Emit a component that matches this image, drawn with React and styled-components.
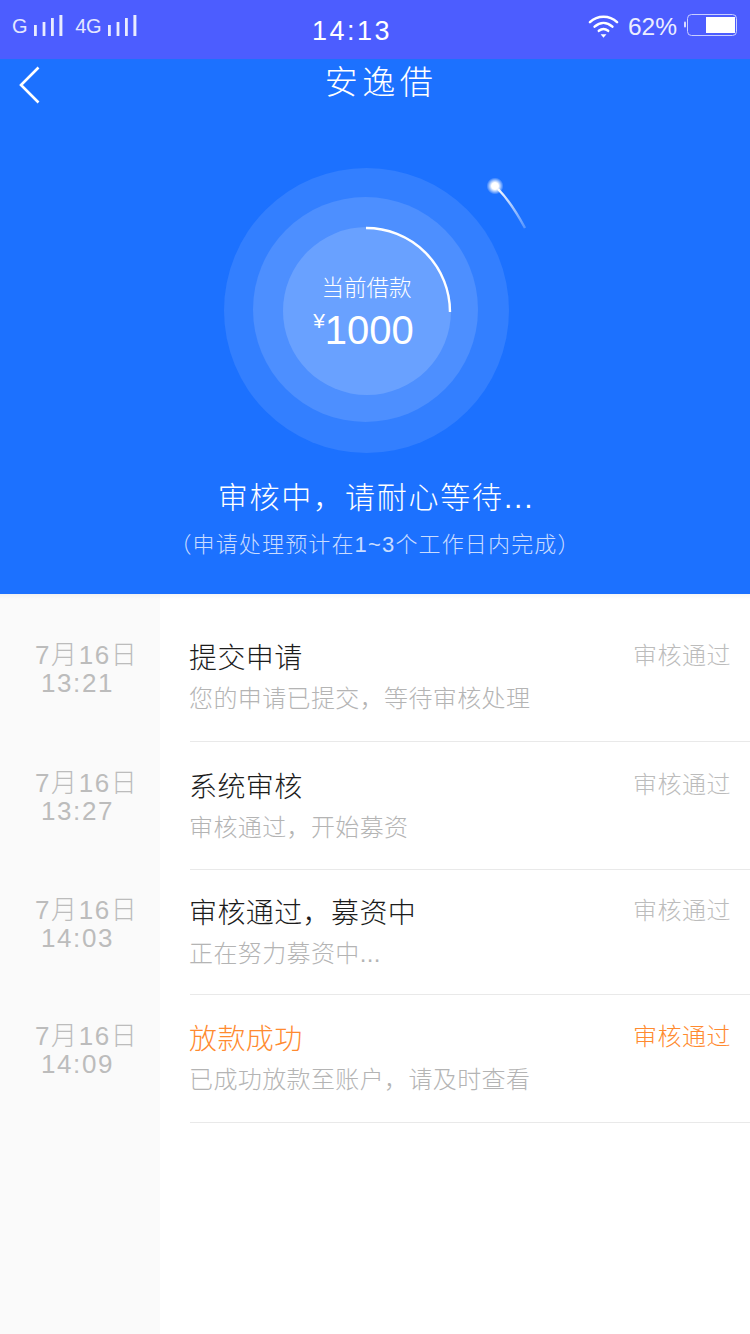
import React from 'react';
import styled, { createGlobalStyle } from 'styled-components';

const GlobalStyle = createGlobalStyle`
  html, body { margin: 0; padding: 0; background: #fff; }
  * { box-sizing: border-box; }
  body { font-family: "Liberation Sans", "Noto Sans CJK SC", sans-serif; }
`;

const Page = styled.div`
  width: 750px;
  height: 1334px;
  display: flex;
  flex-direction: column;
  overflow: hidden;
`;

const StatusBar = styled.div`
  height: 59px;
  flex: none;
  background: #4c5dff;
  color: #fff;
  display: grid;
  grid-template-columns: 300px auto 1fr;
  padding: 0 13px 0 12px;
`;

const StatusLeft = styled.div`
  display: flex;
  align-items: flex-start;
  padding-top: 14px;
  font-size: 20px;
  line-height: 24px;
  letter-spacing: -0.3px;
  color: #e4e7ff;
`;

const SignalLabel = styled.span`
  margin-right: ${(p) => p.$gap}px;
`;

const SignalGroup = styled.svg`
  margin: 1px ${(p) => p.$gap}px 0 0;
`;

const Clock = styled.div`
  font-size: 27px;
  line-height: 30px;
  letter-spacing: 2.5px;
  padding-top: 16px;
`;

const StatusRight = styled.div`
  display: flex;
  justify-content: flex-end;
  align-items: flex-start;
  padding-top: 13px;
  font-size: 24.5px;
  line-height: 26px;
  color: #eceeff;
`;

const Percent = styled.span`
  margin: 1px 7px 0 9px;
`;

const Hero = styled.section`
  height: 535px;
  flex: none;
  background: #1c71ff;
  color: #fff;
  display: flex;
  flex-direction: column;
  align-items: center;
`;

const NavBar = styled.div`
  width: 100%;
  height: 46px;
  position: relative;
  text-align: center;
`;

const BackIcon = styled.svg`
  position: absolute;
  left: 18px;
  top: 7px;
`;

const NavTitle = styled.h1`
  margin: 0;
  padding: 3px 0 0 12px;
  font-size: 33px;
  line-height: 42px;
  font-weight: 300;
  letter-spacing: 4.5px;
`;

const Dial = styled.div`
  position: relative;
  width: 285px;
  height: 285px;
  margin: 63px 17px 0 0;
  border-radius: 50%;
  background: #337fff;
  display: flex;
  align-items: center;
  justify-content: center;
`;

const DialMiddle = styled.div`
  width: 225px;
  height: 225px;
  margin: 0 2px 2px 0;
  border-radius: 50%;
  background: #4d8fff;
  display: flex;
  align-items: center;
  justify-content: center;
`;

const DialInner = styled.div`
  width: 168px;
  height: 168px;
  margin: 2px 0 0 2px;
  border-radius: 50%;
  background: #69a1ff;
  display: flex;
  flex-direction: column;
  align-items: center;
  padding-top: 46px;
`;

const DialLabel = styled.div`
  font-size: 22.5px;
  line-height: 32px;
  font-weight: 300;
`;

const DialAmount = styled.div`
  font-size: 40px;
  line-height: 48px;
  margin: 1px 6px 0 0;
  display: flex;
  align-items: flex-start;
`;

const Currency = styled.span`
  font-size: 21px;
  line-height: 30px;
`;

const DialOverlay = styled.svg`
  position: absolute;
  left: 0;
  top: 0;
  overflow: visible;
`;

const HeroTitle = styled.div`
  margin: 25px 0 0 2px;
  font-size: 30px;
  line-height: 40px;
  font-weight: 300;
  letter-spacing: 1.8px;
`;

const HeroHint = styled.div`
  margin-top: 11px;
  font-size: 22px;
  line-height: 32px;
  font-weight: 300;
  letter-spacing: 1.15px;
  color: #c9dcff;
`;

const Timeline = styled.div`
  flex: 1;
  position: relative;
  display: flex;
  flex-direction: column;

  &::before {
    content: '';
    position: absolute;
    left: 0;
    right: 0;
    top: 0;
    height: 5px;
    background: linear-gradient(rgba(0, 0, 0, 0.035), rgba(0, 0, 0, 0));
  }
`;

const Row = styled.div`
  display: grid;
  grid-template-columns: 160px 1fr;
  height: ${(p) => p.$height}px;
  flex: ${(p) => (p.$fill ? 1 : 'none')};
`;

const DateCell = styled.div`
  background: #fafafa;
  padding: ${(p) => p.$top}px 0 0 35px;
  color: #bcbcbc;
  font-size: 26px;
  line-height: 28px;
  font-weight: 300;
  letter-spacing: 1.6px;
`;

const DateLine = styled.div`
  white-space: nowrap;
  padding-left: ${(p) => p.$indent || 0}px;
`;

const StepCell = styled.div`
  margin-left: 30px;
  padding: ${(p) => p.$top}px 19px 0 0;
  border-bottom: ${(p) => (p.$plain ? 'none' : '1px solid #e9e9e9')};
  display: grid;
  grid-template-columns: 1fr auto;
  align-content: start;
`;

const StepTitle = styled.div`
  font-size: 28px;
  line-height: 40px;
  font-weight: 300;
  letter-spacing: 0.4px;
  text-indent: -1px;
  color: ${(p) => (p.$accent ? '#ff8a2f' : '#1c1c1c')};
`;

const StepStatus = styled.div`
  font-size: 24px;
  line-height: 34px;
  font-weight: 300;
  letter-spacing: 0.5px;
  color: ${(p) => (p.$accent ? '#ff8a2f' : '#bcbcbc')};
`;

const StepNote = styled.div`
  grid-column: 1 / -1;
  margin-top: 3px;
  font-size: 24px;
  line-height: 34px;
  font-weight: 300;
  letter-spacing: 0.38px;
  text-indent: -1px;
  color: #b4b4b4;
`;

const steps = [
  { date: '7月16日', time: '13:21', title: '提交申请', note: '您的申请已提交，等待审核处理', height: 148, top: 45, dateTop: 47 },
  { date: '7月16日', time: '13:27', title: '系统审核', note: '审核通过，开始募资', height: 128, top: 26, dateTop: 27 },
  { date: '7月16日', time: '14:03', title: '审核通过，募资中', note: '正在努力募资中...', height: 125, top: 24, dateTop: 26 },
  { date: '7月16日', time: '14:09', title: '放款成功', note: '已成功放款至账户，请及时查看', height: 128, top: 25, dateTop: 27, accent: true },
];

function Signal({ gap }) {
  return (
    <SignalGroup $gap={gap} width="30" height="24" viewBox="0 0 30 24" fill="#e9ecff">
      <rect x="0" y="10" width="2.8" height="11" />
      <rect x="8.6" y="7" width="2.8" height="14" />
      <rect x="17" y="3" width="2.8" height="18" />
      <rect x="25.4" y="0" width="3" height="21" />
    </SignalGroup>
  );
}

function Wifi() {
  return (
    <svg width="31" height="26" viewBox="0 0 32 26" fill="none" stroke="#fff" strokeWidth="2.6" strokeLinecap="round">
      <path d="M2 9 C10 1.5 22 1.5 30 9" />
      <path d="M6.8 13.6 C12.5 8.6 19.5 8.6 25.2 13.6" />
      <path d="M11.2 18 C14.2 15.6 17.8 15.6 20.8 18" />
      <path d="M13 21.5 L19 21.5 L16 25 Z" fill="#fff" stroke="none" />
    </svg>
  );
}

function Battery() {
  return (
    <svg width="53" height="22" viewBox="0 0 53 22" style={{ marginTop: 1 }}>
      <rect x="0" y="7.5" width="2" height="6" rx="1" fill="#d8dcff" />
      <rect x="3.5" y="0.5" width="49" height="21" rx="4" fill="none" stroke="#c9cfff" />
      <rect x="22" y="3" width="29" height="16" fill="#fff" />
    </svg>
  );
}

export default function App() {
  return (
    <Page>
      <GlobalStyle />
      <StatusBar>
        <StatusLeft>
          <SignalLabel $gap={7}>G</SignalLabel>
          <Signal gap={11} />
          <SignalLabel $gap={7}>4G</SignalLabel>
          <Signal gap={0} />
        </StatusLeft>
        <Clock>14:13</Clock>
        <StatusRight>
          <Wifi />
          <Percent>62%</Percent>
          <Battery />
        </StatusRight>
      </StatusBar>

      <Hero>
        <NavBar>
          <BackIcon width="24" height="38" viewBox="0 0 24 38" fill="none" stroke="#fff" strokeWidth="2.6">
            <path d="M20.5 1.5 L3 19 L20.5 36.5" />
          </BackIcon>
          <NavTitle>安逸借</NavTitle>
        </NavBar>

        <Dial>
          <DialMiddle>
            <DialInner>
              <DialLabel>当前借款</DialLabel>
              <DialAmount>
                <Currency>¥</Currency>1000
              </DialAmount>
            </DialInner>
          </DialMiddle>
          <DialOverlay width="285" height="285" viewBox="0 0 285 285" fill="none">
            <defs>
              <linearGradient id="tail" x1="271" y1="20" x2="301" y2="60" gradientUnits="userSpaceOnUse">
                <stop offset="0" stopColor="#fff" />
                <stop offset="1" stopColor="#fff" stopOpacity="0.25" />
              </linearGradient>
              <radialGradient id="glow">
                <stop offset="0.4" stopColor="#fff" />
                <stop offset="1" stopColor="#fff" stopOpacity="0" />
              </radialGradient>
            </defs>
            <path d="M142 60 A84 84 0 0 1 226 144" stroke="#fff" strokeWidth="2.4" />
            <path d="M274 21 C286 33 294 47 301 60" stroke="url(#tail)" strokeWidth="2.4" />
            <circle cx="271" cy="18" r="8.5" fill="url(#glow)" />
          </DialOverlay>
        </Dial>

        <HeroTitle>审核中，请耐心等待...</HeroTitle>
        <HeroHint>（申请处理预计在1~3个工作日内完成）</HeroHint>
      </Hero>

      <Timeline>
        {steps.map((step) => (
          <Row key={step.time} $height={step.height}>
            <DateCell $top={step.dateTop}>
              <DateLine>{step.date}</DateLine>
              <DateLine $indent={6}>{step.time}</DateLine>
            </DateCell>
            <StepCell $top={step.top}>
              <StepTitle $accent={step.accent}>{step.title}</StepTitle>
              <StepStatus $accent={step.accent}>审核通过</StepStatus>
              <StepNote>{step.note}</StepNote>
            </StepCell>
          </Row>
        ))}
        <Row $fill>
          <DateCell />
          <StepCell $plain />
        </Row>
      </Timeline>
    </Page>
  );
}
